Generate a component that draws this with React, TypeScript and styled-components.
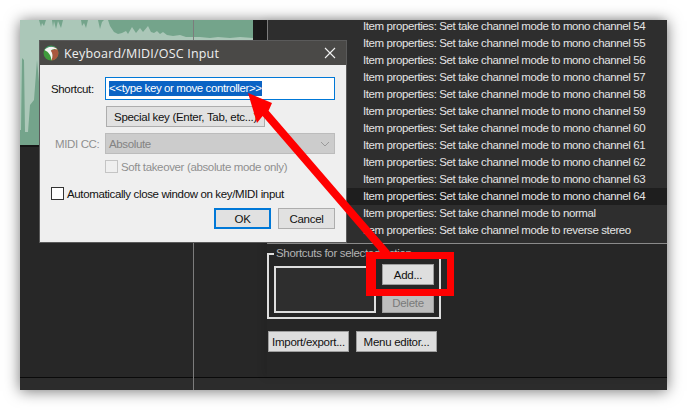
import React from 'react';
import styled, { createGlobalStyle } from 'styled-components';

const GlobalStyle = createGlobalStyle`
  html, body {
    margin: 0;
    background: #ffffff;
  }
  body {
    font-family: "Liberation Sans", Arial, sans-serif;
  }
`;

const Page = styled.div`
  width: 687px;
  height: 410px;
  padding: 20px;
  box-sizing: border-box;
  overflow: hidden;
`;

const AppWindow = styled.div`
  position: relative;
  width: 647px;
  height: 370px;
  display: flex;
  flex-direction: column;
  background: #272727;
  box-shadow: 0 1px 14px rgba(0, 0, 0, 0.55);
`;

const Main = styled.div`
  flex: 1;
  display: flex;
  min-height: 0;
`;

const Footer = styled.div`
  height: 12px;
  background: #2c2c2c;
  border-top: 1px solid #0a0a0a;
`;

const Timeline = styled.div`
  width: 247px;
  display: flex;
  flex-direction: column;
  background: #272727;
`;

const ClipRow = styled.div`
  height: 125px;
  display: flex;
  background: #1c1c1c;
  border-bottom: 2px solid #161616;
`;

const Wave = styled.svg`
  display: block;
  flex: none;
`;

const PlayLine = styled.div`
  position: absolute;
  left: 173px;
  top: 0;
  bottom: 0;
  width: 1px;
  background: #7c7c7c;
`;

const ActionsPanel = styled.div`
  position: relative;
  width: 400px;
  display: flex;
  flex-direction: column;
  background: #262626;
  box-shadow: -3px 0 8px rgba(0, 0, 0, 0.1);
`;

const ActionList = styled.div`
  height: 224px;
  flex: none;
  box-sizing: border-box;
  overflow: hidden;
  background: #2e2e2e;
  border-left: 1px solid #7c7c7c;
  border-bottom: 1px solid #8a8a8a;
`;

const ActionRows = styled.div`
  margin-top: -2px;
`;

const ActionRow = styled.div<{ $active?: boolean }>`
  height: 17px;
  line-height: 17px;
  padding-left: 95px;
  font-size: 11.5px;
  letter-spacing: -0.4px;
  white-space: nowrap;
  color: #e4e4e4;
  background: ${(p) => (p.$active ? '#1e1e1e' : 'transparent')};
`;

const LowerPane = styled.div`
  flex: 1;
  display: flex;
  flex-direction: column;
  padding: 9px 0 0 0;
`;

const ShortcutGroup = styled.div`
  position: relative;
  width: 174px;
  height: 66px;
  box-sizing: border-box;
  border: 2px solid #dedede;
  display: flex;
  gap: 6px;
  padding: 11px 5px 4px 5px;
`;

const GroupLegend = styled.span`
  position: absolute;
  left: 5px;
  top: -9px;
  padding: 0 2px;
  font-size: 11.5px;
  letter-spacing: -0.33px;
  line-height: 14px;
  color: #b4b4b4;
  background: #262626;
`;

const ShortcutBox = styled.div`
  width: 103px;
  box-sizing: border-box;
  border: 2px solid #dedede;
  background: #2e2e2e;
`;

const ShortcutButtons = styled.div`
  display: flex;
  flex-direction: column;
  gap: 7px;
  margin-top: -2px;
`;

const DarkButton = styled.button<{ $disabled?: boolean; $w: number }>`
  width: ${(p) => p.$w}px;
  height: 21px;
  padding: 0;
  box-sizing: border-box;
  font-family: inherit;
  font-size: 11.5px;
  letter-spacing: -0.28px;
  border: 1px solid #9e9e9e;
  color: ${(p) => (p.$disabled ? '#7a7a7a' : '#111111')};
  background: ${(p) => (p.$disabled ? '#bdbdbd' : '#dedede')};
`;

const BottomButtons = styled.div`
  display: flex;
  gap: 7px;
  margin-top: 12px;
  padding-left: 1px;
`;

const Dialog = styled.div`
  position: absolute;
  left: 19px;
  top: 20px;
  width: 308px;
  height: 203px;
  box-sizing: border-box;
  display: flex;
  flex-direction: column;
  border: 1px solid #5a5a5a;
  background: #efefef;
`;

const TitleBar = styled.div`
  height: 24px;
  flex: none;
  display: flex;
  align-items: center;
  gap: 5px;
  padding: 0 4px 0 3px;
  background: #4a4947;
  color: #efefef;
`;

const TitleText = styled.span`
  flex: 1;
  font-family: "Open Sans", sans-serif;
  font-size: 12.5px;
  letter-spacing: 0.18px;
`;

const CloseIcon = styled.svg`
  display: block;
  margin-right: 6px;
`;

const DialogBody = styled.div`
  flex: 1;
  display: flex;
  flex-direction: column;
  padding: 12px 11px 0 11px;
  font-size: 11.5px;
  letter-spacing: -0.36px;
  color: #111111;
`;

const FieldRow = styled.div<{ $top?: number }>`
  display: flex;
  align-items: center;
  margin-top: ${(p) => p.$top ?? 0}px;
`;

const FieldLabel = styled.label<{ $muted?: boolean }>`
  width: 54px;
  flex: none;
  box-sizing: border-box;
  padding-left: ${(p) => (p.$muted ? 4 : 0)}px;
  color: ${(p) => (p.$muted ? '#8f8f8f' : '#111111')};
`;

const ShortcutField = styled.div`
  width: 231px;
  height: 23px;
  box-sizing: border-box;
  border: 1px solid #0078d7;
  background: #ffffff;
  padding: 3px 3px;
  display: flex;
`;

const Selected = styled.span`
  display: block;
  height: 15px;
  line-height: 15px;
  color: #ffffff;
  background: #0a63c4;
  white-space: nowrap;
  letter-spacing: -0.4px;
`;

const PlainButton = styled.button<{ $w: number; $primary?: boolean; $left?: number }>`
  width: ${(p) => p.$w}px;
  height: 21px;
  margin-left: ${(p) => p.$left ?? 0}px;
  padding: 0;
  box-sizing: border-box;
  font-family: inherit;
  font-size: 11.5px;
  letter-spacing: -0.3px;
  color: #111111;
  background: #e1e1e1;
  border: ${(p) => (p.$primary ? '2px solid #0078d7' : '1px solid #adadad')};
`;

const SelectBox = styled.div`
  width: 231px;
  height: 21px;
  box-sizing: border-box;
  border: 1px solid #bcbcbc;
  background: #cccccc;
  color: #838383;
  display: flex;
  align-items: center;
  justify-content: space-between;
  padding: 0 4px 0 3px;
`;

const Check = styled.span<{ $muted?: boolean }>`
  width: 13px;
  height: 13px;
  flex: none;
  box-sizing: border-box;
  border: 1px solid ${(p) => (p.$muted ? '#c4c4c4' : '#333333')};
  background: ${(p) => (p.$muted ? '#efefef' : '#ffffff')};
  margin-right: 3px;
`;

const CheckText = styled.span<{ $muted?: boolean }>`
  color: ${(p) => (p.$muted ? '#8f8f8f' : '#111111')};
  white-space: nowrap;
`;

const DialogActions = styled.div`
  display: flex;
  justify-content: flex-end;
  gap: 7px;
  margin-top: 8px;
`;

const Annotation = styled.svg`
  position: absolute;
  left: 0;
  top: 0;
  pointer-events: none;
`;

const channels = [54, 55, 56, 57, 58, 59, 60, 61, 62, 63, 64];

const wavePoints =
  '0,0 19,0 21,7 22,3 24,6 26,0 32,0 33,7 34,1 36,9 38,1 41,8 43,0 61,0 62,6 64,3 66,8 68,0 78,0 80,9 82,2 84,0 ' +
  '88,0 90,6 94,12 98,14 102,13 106,11 108,14 112,7 116,13 120,8 123,12 128,6 131,12 134,13 137,11 140,14 143,12 ' +
  '147,15 153,16 160,15 166,17 180,17 190,18 198,17 210,18 220,17 233,18 233,125 24,125 19,62 17,40 14,80 10,85 ' +
  '8,112 5,112 4,40 2,38 1,110 0,110';

const App: React.FC = () => {
  return (
    <Page>
      <GlobalStyle />
      <AppWindow>
        <Main>
          <Timeline>
            <ClipRow>
              <Wave width="233" height="125" viewBox="0 0 233 125">
                <rect width="233" height="125" fill="#74a48b" />
                <polygon points={wavePoints} fill="#abc7b8" />
              </Wave>
            </ClipRow>
          </Timeline>
          <ActionsPanel>
            <ActionList>
              <ActionRows>
                {channels.map((c) => (
                  <ActionRow key={c} $active={c === 64}>
                    Item properties: Set take channel mode to mono channel {c}
                  </ActionRow>
                ))}
                <ActionRow>Item properties: Set take channel mode to normal</ActionRow>
                <ActionRow>Item properties: Set take channel mode to reverse stereo</ActionRow>
              </ActionRows>
            </ActionList>
            <LowerPane>
              <ShortcutGroup>
                <GroupLegend>Shortcuts for selected action</GroupLegend>
                <ShortcutBox />
                <ShortcutButtons>
                  <DarkButton $w={52}>Add...</DarkButton>
                  <DarkButton $w={52} $disabled>Delete</DarkButton>
                </ShortcutButtons>
              </ShortcutGroup>
              <BottomButtons>
                <DarkButton $w={81}>Import/export...</DarkButton>
                <DarkButton $w={81}>Menu editor...</DarkButton>
              </BottomButtons>
            </LowerPane>
          </ActionsPanel>
        </Main>
        <Footer />
        <PlayLine />
        <Dialog>
          <TitleBar>
            <svg width="16" height="16" viewBox="0 0 16 16">
              <circle cx="8" cy="8" r="7.5" fill="#3f9a3c" />
              <path d="M9 1.500C12.500 2 15.500 4.500 15.500 8A7.500 7.500 0 0 1 8.500 15.500C10 11 9.500 8 7.500 6 8.500 4.500 10 4 12 5 11 3.500 10 2.500 9 1.500Z" fill="#a9573f" />
              <path d="M1.500 5C5 .8 11 .8 14.500 4.500 11.500 3.300 9 4 7.800 5.800 9.800 8.300 10 11.500 8.500 15.500 8 10.500 6 7.200 1.500 5Z" fill="#f4f4f4" />
              <path d="M2 4.200A7.500 7.500 0 0 1 14 3.600 9 9 0 0 0 2 4.200Z" fill="#3f8f8c" />
            </svg>
            <TitleText>Keyboard/MIDI/OSC Input</TitleText>
            <CloseIcon width="12" height="12" viewBox="0 0 12 12">
              <path d="M1 1L11 11M11 1L1 11" stroke="#f2f2f2" strokeWidth="1.100" fill="none" />
            </CloseIcon>
          </TitleBar>
          <DialogBody>
            <FieldRow>
              <FieldLabel>Shortcut:</FieldLabel>
              <ShortcutField>
                <Selected>&lt;&lt;type key or move controller&gt;&gt;</Selected>
              </ShortcutField>
            </FieldRow>
            <FieldRow $top={6}>
              <FieldLabel />
              <PlainButton $w={159} $left={1}>Special key (Enter, Tab, etc...)</PlainButton>
            </FieldRow>
            <FieldRow $top={6}>
              <FieldLabel $muted>MIDI CC:</FieldLabel>
              <SelectBox>
                Absolute
                <svg width="10" height="6" viewBox="0 0 10 6">
                  <path d="M1 1L5 5L9 1" stroke="#9a9a9a" strokeWidth="1" fill="none" />
                </svg>
              </SelectBox>
            </FieldRow>
            <FieldRow $top={6}>
              <FieldLabel />
              <Check $muted />
              <CheckText $muted>Soft takeover (absolute mode only)</CheckText>
            </FieldRow>
            <FieldRow $top={14}>
              <Check />
              <CheckText>Automatically close window on key/MIDI input</CheckText>
            </FieldRow>
            <DialogActions>
              <PlainButton $w={57} $primary>OK</PlainButton>
              <PlainButton $w={57}>Cancel</PlainButton>
            </DialogActions>
          </DialogBody>
        </Dialog>
        <Annotation width="647" height="370" viewBox="0 0 647 370">
          <polygon points="228,73 252,83 248.600,90.800 370,231.400 364,236.600 242.600,96 237,103" fill="#ff0000" />
          <path d="M346 232H434V276H346ZM356 239V269H427V239Z" fill="#ff0000" fillRule="evenodd" />
        </Annotation>
      </AppWindow>
    </Page>
  );
};

export default App;
